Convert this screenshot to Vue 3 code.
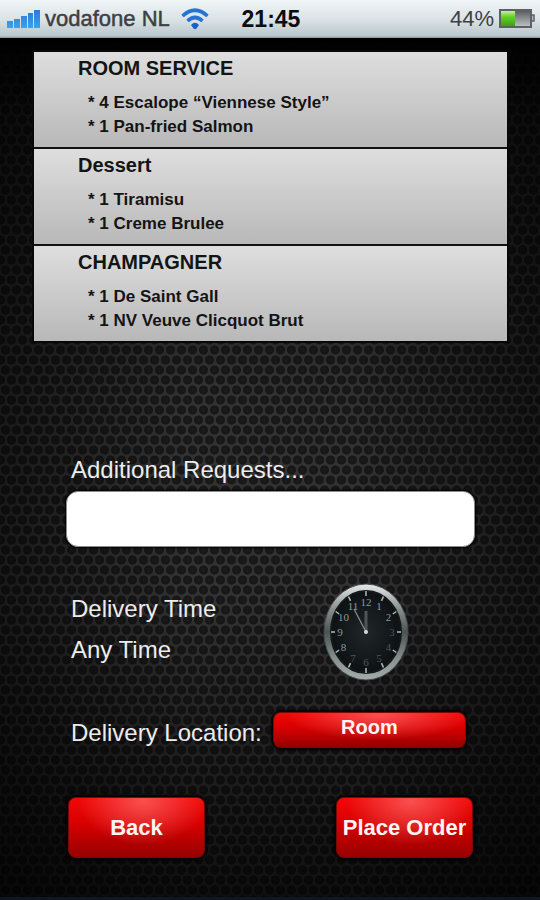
<script setup>
import { ref } from "vue";

const sections = [
  {
    title: "ROOM SERVICE",
    items: [
      { qty: 4, name: "Escalope “Viennese Style”" },
      { qty: 1, name: "Pan-fried Salmon" },
    ],
  },
  {
    title: "Dessert",
    items: [
      { qty: 1, name: "Tiramisu" },
      { qty: 1, name: "Creme Brulee" },
    ],
  },
  {
    title: "CHAMPAGNER",
    items: [
      { qty: 1, name: "De Saint Gall" },
      { qty: 1, name: "NV Veuve Clicquot Brut" },
    ],
  },
];

const requests = ref("");

// Clock face is slightly taller than wide, so ticks and numerals follow an ellipse
const onFace = (hour, rx, ry) => {
  const a = (hour * Math.PI) / 6;
  return { x: 43 + rx * Math.sin(a), y: 49 - ry * Math.cos(a) };
};

const hours = Array.from({ length: 12 }, (_, i) => {
  const hour = i + 1;
  return {
    hour,
    outer: onFace(hour, 35, 41),
    inner: onFace(hour, 31, 36),
    label: onFace(hour, 26, 30),
    // the lower right of the face sits in shade
    opacity: hour > 2 && hour < 8 ? 0.4 : 0.8,
  };
});
</script>

<template>
  <div class="screen">
    <header class="status-bar">
      <div class="carrier">
        <svg class="signal" width="33" height="20" viewBox="0 0 33 20" aria-hidden="true">
          <defs>
            <linearGradient id="bars" x1="0" y1="0" x2="0" y2="1">
              <stop offset="0" stop-color="#2f78d8" />
              <stop offset="1" stop-color="#35a4f0" />
            </linearGradient>
          </defs>
          <path
            fill="url(#bars)"
            d="M0 12h6v7H0zM7 10h6v9H7zM14 7h6v12h-6zM21 4h5v15h-5zM27 1h6v18h-6z"
          />
        </svg>
        <span>vodafone NL</span>
        <svg class="wifi" width="28" height="22" viewBox="0 0 28 22" aria-hidden="true">
          <g fill="none" stroke="#2474d6" stroke-width="3.600">
            <path d="M1.500 8 Q14 -3.500 26.500 8" />
            <path d="M6.500 13 Q14 6 21.500 13" />
          </g>
          <path fill="#1c5fc8" d="M10 17 Q14 12.500 18 17 L15.500 20.500 Q14 22 12.500 20.500Z" />
        </svg>
      </div>
      <time class="time">21:45</time>
      <div class="battery">
        <span>44%</span>
        <svg width="36" height="20" viewBox="0 0 36 20" aria-hidden="true">
          <defs>
            <linearGradient id="charge" x1="0" y1="0" x2="0" y2="1">
              <stop offset="0" stop-color="#c8ee9c" />
              <stop offset="0.4" stop-color="#62cf28" />
              <stop offset="1" stop-color="#3f9e16" />
            </linearGradient>
            <linearGradient id="empty" x1="0" y1="0" x2="0" y2="1">
              <stop offset="0" stop-color="#55585a" />
              <stop offset="1" stop-color="#c3c6c8" />
            </linearGradient>
          </defs>
          <rect x="1" y="1" width="31" height="17" fill="url(#empty)" stroke="#5c6264" stroke-width="2" />
          <rect x="2" y="2" width="14" height="15" fill="url(#charge)" />
          <path d="M33 6h2v6h-2" fill="#b5babc" stroke="#5c6264" stroke-width="1.500" />
        </svg>
      </div>
    </header>

    <main>
      <div class="order">
        <section v-for="section in sections" :key="section.title" class="course">
          <h2>{{ section.title }}</h2>
          <ul>
            <li v-for="item in section.items" :key="item.name">
              * {{ item.qty }} {{ item.name }}
            </li>
          </ul>
        </section>
      </div>

      <form class="details" @submit.prevent>
        <label class="text" for="requests">Additional Requests...</label>
        <input id="requests" v-model="requests" class="requests" type="text" />

        <div class="delivery-time">
          <div class="when">
            <label class="text" for="clock">Delivery Time</label>
            <span class="text">Any Time</span>
          </div>
          <button id="clock" class="clock" type="button">
            <svg width="86" height="98" viewBox="0 0 86 98" aria-hidden="true">
              <defs>
                <linearGradient id="rim" x1="0" y1="0" x2="0" y2="1">
                  <stop offset="0" stop-color="#e6eaea" />
                  <stop offset="0.25" stop-color="#8b9292" />
                  <stop offset="0.5" stop-color="#4c5353" />
                  <stop offset="0.8" stop-color="#8c9393" />
                  <stop offset="1" stop-color="#a4abab" />
                </linearGradient>
                <radialGradient id="face">
                  <stop offset="0" stop-color="#202729" />
                  <stop offset="1" stop-color="#0d1113" />
                </radialGradient>
              </defs>
              <ellipse cx="43" cy="49" rx="42" ry="48" fill="url(#rim)" stroke="#454b4b" />
              <ellipse cx="43" cy="49" rx="35" ry="41" fill="url(#face)" stroke="#151919" stroke-width="2" />
              <g v-for="h in hours" :key="h.hour">
                <line
                  :x1="h.outer.x"
                  :y1="h.outer.y"
                  :x2="h.inner.x"
                  :y2="h.inner.y"
                  stroke="#b4baba"
                  stroke-width="1.500"
                />
                <text
                  :x="h.label.x"
                  :y="h.label.y + 4"
                  :fill-opacity="h.opacity"
                  class="numeral"
                >{{ h.hour }}</text>
              </g>
              <path d="M43 49V28" stroke="#4e5557" stroke-width="3" />
              <path d="M43 49L31 26" stroke="#8b9294" stroke-width="1.200" />
              <circle cx="43" cy="49" r="2" fill="#d5dada" />
            </svg>
          </button>
        </div>

        <div class="delivery-location">
          <label class="text" for="location">Delivery Location:</label>
          <button id="location" class="glossy location" type="button">Room</button>
        </div>

        <div class="actions">
          <button class="glossy" type="button">Back</button>
          <button class="glossy" type="submit">Place Order</button>
        </div>
      </form>
    </main>
  </div>
</template>

<style>
body {
  margin: 0;
  background: #000;
}
</style>

<style scoped>
.screen {
  box-sizing: border-box;
  min-height: 100vh;
  font-family: "Liberation Sans", Arial, Helvetica, sans-serif;
  border-bottom: 3px solid #0e1722;
  /* shading on top, then two staggered rows of holes in the metal sheet */
  background:
    linear-gradient(90deg, rgba(0, 0, 0, 0.5), transparent 35%, transparent 65%, rgba(0, 0, 0, 0.5)),
    linear-gradient(#000 40px, rgba(0, 0, 0, 0.5) 120px, transparent 400px, transparent 600px, rgba(0, 0, 0, 0.7)),
    radial-gradient(circle at 50% 50%, #1c1c1c, #161616 4px, transparent 5px) 0 0 / 11px 20px,
    radial-gradient(circle at 50% 50%, #1c1c1c, #161616 4px, transparent 5px) 6px 10px / 11px 20px,
    #323232;
}

.status-bar {
  display: grid;
  grid-template-columns: 1fr auto 1fr;
  align-items: center;
  height: 38px;
  padding: 0 5px 0 7px;
  box-sizing: border-box;
  font-size: 22px;
  color: #3c4043;
  background: linear-gradient(#f0f5f7, #dbe3e6 50%, #bcc8cc 94%, #87969a);
}

.carrier,
.battery {
  display: flex;
  align-items: center;
}

.carrier {
  gap: 5px;
  white-space: nowrap;
  -webkit-text-stroke: 0.5px #3c4043;
}

.wifi {
  margin-left: 6px;
}

.time {
  font-size: 23px;
  font-weight: bold;
  color: #0c0d0e;
}

.battery {
  justify-content: flex-end;
  gap: 5px;
}

main {
  padding: 14px 33px 39px 34px;
}

.order {
  display: flex;
  flex-direction: column;
  gap: 2px;
  background: #111;
  box-shadow: 0 0 0 2px #080808;
}

.course {
  padding: 4px 44px 8px;
  color: #141414;
  background: linear-gradient(#dedede, #b8b8b8);
}

.course h2 {
  margin: 0 0 11px;
  font-size: 20px;
  line-height: 24px;
}

.course ul {
  margin: 0;
  padding: 0 0 0 10px;
  list-style: none;
  font-size: 17px;
  font-weight: bold;
  line-height: 24px;
}

.details {
  display: flex;
  flex-direction: column;
  padding: 114px 32px 0;
}

.text {
  padding-left: 5px;
  font-size: 24px;
  line-height: 30px;
  color: #ececec;
}

.requests {
  box-sizing: border-box;
  width: 100%;
  height: 56px;
  margin-top: 6px;
  padding: 0 12px;
  font: inherit;
  font-size: 24px;
  background: #fff;
  border: 1px solid #8c8c8c;
  border-radius: 12px;
  box-shadow: 0 0 2px 1px #000;
}

.delivery-time {
  display: flex;
  justify-content: space-between;
  align-items: flex-start;
  margin-top: 36px;
  padding-right: 66px;
}

.when {
  display: flex;
  flex-direction: column;
  gap: 11px;
  padding-top: 11px;
}

.clock {
  padding: 0;
  border: 0;
  background: none;
}

.clock svg {
  display: block;
}

.numeral {
  font-family: "Liberation Serif", serif;
  font-size: 11px;
  text-anchor: middle;
  fill: #b4baba;
}

.delivery-location {
  display: flex;
  align-items: flex-end;
  gap: 11px;
  margin-top: 31px;
  padding-right: 9px;
}

.actions {
  display: flex;
  justify-content: space-between;
  margin-top: 49px;
  padding: 0 2px;
}

.glossy {
  box-sizing: border-box;
  min-width: 137px;
  height: 61px;
  padding: 0 4px;
  font-family: inherit;
  font-size: 22px;
  font-weight: bold;
  white-space: nowrap;
  color: #fff4f2;
  border: 1px solid #7a0808;
  border-radius: 8px;
  background:
    radial-gradient(ellipse 48% 75% at 55% 5%, rgba(255, 110, 110, 0.7), transparent),
    linear-gradient(#f20808, #d60000 45%, #960000);
  box-shadow: 0 0 3px 2px #080000;
}

.location {
  flex: 1;
  height: 36px;
  padding-bottom: 5px;
  font-size: 20px;
}
</style>
